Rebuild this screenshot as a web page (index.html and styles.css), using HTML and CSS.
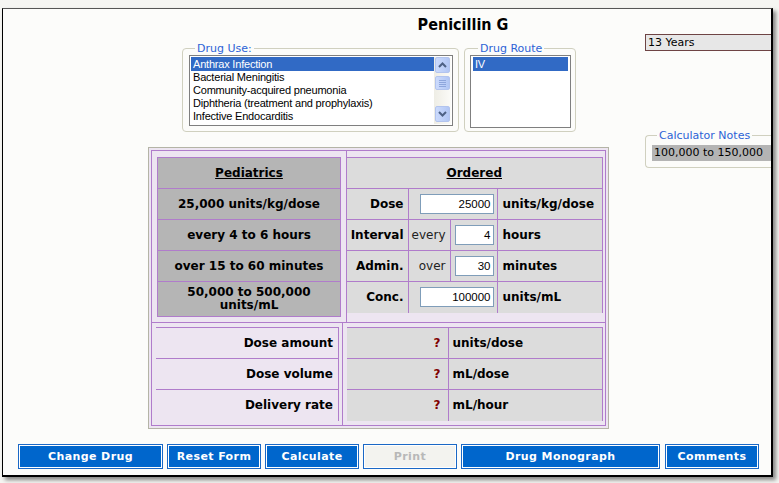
FILE: index.html
```html
<!DOCTYPE html>
<html>
<head>
<meta charset="utf-8">
<title>Penicillin G</title>
<link rel="stylesheet" href="styles.css">
</head>
<body>
<div class="win">
  <h1 class="title">Penicillin G</h1>
  <div class="main">
    <div class="center">
      <div class="selectors">
        <fieldset class="grp grp-use">
          <legend>Drug Use:</legend>
          <div class="listbox lb-use">
            <ul class="items">
              <li class="sel">Anthrax Infection</li>
              <li>Bacterial Meningitis</li>
              <li>Community-acquired pneumonia</li>
              <li>Diphtheria (treatment and prophylaxis)</li>
              <li>Infective Endocarditis</li>
            </ul>
            <div class="scrollbar">
              <div class="sb-btn"><svg width="9" height="6" viewBox="0 0 9 6"><path d="M1 5 L4.5 1.5 L8 5" fill="none" stroke="#4d6185" stroke-width="2"/></svg></div>
              <div class="sb-thumb"><svg width="7" height="7" viewBox="0 0 7 7"><path d="M0 0.5H7M0 2.5H7M0 4.5H7M0 6.5H7" stroke="#8ea6dc" stroke-width="1"/></svg></div>
              <div class="sb-track"></div>
              <div class="sb-btn"><svg width="9" height="6" viewBox="0 0 9 6"><path d="M1 1 L4.5 4.5 L8 1" fill="none" stroke="#4d6185" stroke-width="2"/></svg></div>
            </div>
          </div>
        </fieldset>
        <fieldset class="grp grp-route">
          <legend>Drug Route</legend>
          <div class="listbox lb-route">
            <ul class="items">
              <li class="sel">IV</li>
            </ul>
          </div>
        </fieldset>
      </div>

      <div class="calc">
        <div class="calc-in">
          <div class="calc-top">
            <div class="ped-cell">
              <table class="ped">
                <tr><td class="hd"><u>Pediatrics</u></td></tr>
                <tr><td>25,000 units/kg/dose</td></tr>
                <tr><td>every 4 to 6 hours</td></tr>
                <tr><td>over 15 to 60 minutes</td></tr>
                <tr class="two"><td>50,000 to 500,000<br>units/mL</td></tr>
              </table>
            </div>
            <div class="ord-cell">
              <table class="ord">
                <colgroup><col class="c1"><col class="c2"><col class="c3"><col class="c4"></colgroup>
                <tr><td class="hd" colspan="4"><u>Ordered</u></td></tr>
                <tr><td class="lab">Dose</td><td class="inp" colspan="2"><input class="num wide" value="25000"></td><td class="unit">units/kg/dose</td></tr>
                <tr><td class="lab">Interval</td><td class="pre">every</td><td class="inp"><input class="num narrow" value="4"></td><td class="unit">hours</td></tr>
                <tr><td class="lab">Admin.</td><td class="pre">over</td><td class="inp"><input class="num narrow" value="30"></td><td class="unit">minutes</td></tr>
                <tr><td class="lab">Conc.</td><td class="inp" colspan="2"><input class="num wide" value="100000"></td><td class="unit">units/mL</td></tr>
              </table>
            </div>
          </div>
          <div class="calc-bot">
            <div class="lbl-cell">
              <table class="lbl">
                <tr><td>Dose amount</td></tr>
                <tr><td>Dose volume</td></tr>
                <tr><td>Delivery rate</td></tr>
              </table>
            </div>
            <div class="val-cell">
              <table class="val">
                <colgroup><col class="v1"><col class="v2"></colgroup>
                <tr><td class="q">?</td><td class="unit">units/dose</td></tr>
                <tr><td class="q">?</td><td class="unit">mL/dose</td></tr>
                <tr><td class="q">?</td><td class="unit">mL/hour</td></tr>
              </table>
            </div>
          </div>
        </div>
      </div>
    </div>

    <div class="side">
      <div class="age">13 Years</div>
      <fieldset class="grp notes">
        <legend>Calculator Notes</legend>
        <div class="note">100,000 to 150,000</div>
      </fieldset>
    </div>
  </div>

  <div class="buttons">
    <button class="btn b-change">Change Drug</button>
    <button class="btn b-std">Reset Form</button>
    <button class="btn b-std">Calculate</button>
    <button class="btn b-std off" disabled>Print</button>
    <button class="btn b-mono">Drug Monograph</button>
    <button class="btn b-std b-last">Comments</button>
  </div>
</div>
</body>
</html>
```

FILE: styles.css
```css
* { box-sizing: border-box; }
html, body { margin: 0; padding: 0; }
body {
  width: 779px;
  height: 483px;
  overflow: hidden;
  background: #f5f5f2;
  font-family: "DejaVu Sans", Verdana, sans-serif;
  font-size: 12px;
  color: #000;
}

.win {
  margin: 8px 0 0 2px;
  width: 771px;
  height: 469px;
  background: #fcfcfa;
  border-left: 1px solid #000;
  border-top: 1px solid #555;
  border-right: 2px solid #000;
  border-bottom: 2px solid #000;
  box-shadow: 3px 3px 4px rgba(0, 0, 0, 0.45);
  overflow: hidden;
}

.title {
  margin: 0;
  height: 25px;
  padding: 6px 0 0 152px;
  text-align: center;
  font-family: "DejaVu Sans Condensed", "DejaVu Sans", sans-serif;
  font-stretch: condensed;
  font-weight: bold;
  font-size: 16px;
  line-height: 19px;
}

.main {
  display: flex;
  align-items: flex-start;
  padding-left: 145px;
}

.center { width: 461px; flex: none; }

.selectors {
  display: flex;
  gap: 5px;
  margin: 8px 0 0 34px;
}

.grp {
  margin: 0;
  min-width: 0;
  border: 1px solid #d0d0bf;
  border-radius: 4px;
}
.grp legend {
  font-size: 11px;
  line-height: 13px;
  color: #2d63d6;
  padding: 0 2px;
}
.grp-use { width: 277px; height: 90px; padding: 0 5px 5px 6px; }
.grp-use legend { margin-left: 6px; }
.grp-route { width: 112px; height: 90px; padding: 0 4px 3px 5px; }
.grp-route legend { margin-left: 8px; }

.listbox {
  display: flex;
  background: #fff;
  border: 1px solid #7f7f7f;
  padding: 1px;
}
.lb-use { height: 71px; }
.lb-route { height: 73px; padding: 1px 2px; }

.items {
  flex: 1;
  margin: 0;
  padding: 0;
  list-style: none;
  font-family: "Liberation Sans", Arial, sans-serif;
  font-size: 11px;
  letter-spacing: -0.2px;
  white-space: nowrap;
  overflow: hidden;
}
.items li { height: 13px; line-height: 13px; padding-left: 2px; }
.items li.sel { background: #316ac5; color: #fff; height: 14px; line-height: 14px; }

.scrollbar {
  width: 17px;
  flex: none;
  display: flex;
  flex-direction: column;
  padding: 0 1px 2px 1px;
  background: linear-gradient(to right, #eeede5, #fbfbf8);
}
.sb-btn, .sb-thumb {
  height: 16px;
  display: flex;
  align-items: center;
  justify-content: center;
  border: 1px solid #b2c4ee;
  border-radius: 2px;
  background: linear-gradient(to right, #cbdafc, #bccff8 60%, #b1c6f4);
}
.sb-thumb { height: 14px; margin-top: 3px; }
.sb-track { flex: 1; }

/* calculator table */
.calc {
  margin-top: 15px;
  border: 1px solid #b4b4a6;
  padding: 2px;
  background: #ede5f1;
}
.calc-in { border: 1px solid #b07ccb; }
.calc-top { display: flex; }
.calc-bot { display: flex; border-top: 1px solid #b07ccb; }

.ped-cell {
  width: 195px;
  flex: none;
  padding: 6px 5px 5px 5px;
  border-right: 1px solid #b07ccb;
}
.ord-cell { flex: 1; padding: 6px 3px 0 0; }
.lbl-cell {
  width: 191px;
  flex: none;
  padding: 4px 3px 4px 4px;
  border-right: 1px solid #b07ccb;
}
.val-cell { flex: 1; padding: 4px 3px 4px 4px; }

table { border-collapse: collapse; border-spacing: 0; }
td { padding: 0; font-weight: bold; font-size: 12px; }

.ped { width: 100%; }
.ped td {
  height: 31px;
  background: #b5b5b5;
  border: 1px solid #b07ccb;
  text-align: center;
  line-height: 13px;
}
.ped tr.two td { height: 35px; }

.ord { width: 255px; table-layout: fixed; }
.ord col.c1 { width: 61px; }
.ord col.c2 { width: 42px; }
.ord col.c3 { width: 47px; }
.ord col.c4 { width: 105px; }
.ord td {
  height: 31px;
  background: #dcdcdc;
  border: 1px solid #b07ccb;
  border-bottom: none;
}
.ord tr td:first-child { border-left: none; }
.ord td.hd { text-align: center; }
.ord td.lab { text-align: right; padding-right: 4px; }
.ord td.pre { text-align: right; padding-right: 4px; font-weight: normal; color: #222; }
.ord td.inp { text-align: right; padding-right: 3px; }
.ord td.unit, .val td.unit { text-align: left; padding-left: 5px; }

.num {
  height: 20px;
  margin: 0;
  padding: 0 2px 0 2px;
  border: 1px solid #7f9db9;
  background: #fff;
  font-family: "Liberation Sans", Arial, sans-serif;
  font-size: 11.5px;
  text-align: right;
  color: #000;
  vertical-align: middle;
}
.num.wide { width: 74px; }
.num.narrow { width: 39px; }

.lbl { width: 183px; }
.lbl td {
  height: 31px;
  border-top: 1px solid #b07ccb;
  border-right: 1px solid #b07ccb;
  text-align: right;
  padding-right: 5px;
}

.val { width: 255px; table-layout: fixed; }
.val col.v1 { width: 101px; }
.val col.v2 { width: 154px; }
.val td {
  height: 31px;
  background: #dcdcdc;
  border-top: 1px solid #b07ccb;
  border-right: 1px solid #b07ccb;
}
.val td.q { text-align: right; padding-right: 7px; color: #800000; }
.val td.unit { padding-left: 4px; }

/* right side */
.side { width: 160px; flex: none; margin-left: 36px; }
.age {
  height: 17px;
  border: 1px solid #6e4444;
  background: #e7e7e7;
  font-size: 11px;
  line-height: 15px;
  padding-left: 2px;
}
.notes { margin-top: 78px; padding: 3px 0 6px 6px; border-right: none; }
.notes legend { margin-left: 5px; }
.note {
  height: 16px;
  background: #b4b4b4;
  font-size: 11px;
  line-height: 16px;
  padding-left: 2px;
  white-space: nowrap;
}

/* buttons */
.buttons {
  display: flex;
  gap: 4px;
  margin-top: 15px;
  padding-left: 15px;
}
.btn {
  height: 25px;
  margin: 0;
  padding: 0;
  border: 1px solid #1a68c6;
  box-shadow: inset 0 0 0 1px #fff;
  background: #0066cc;
  color: #fff;
  font-family: "DejaVu Sans", Verdana, sans-serif;
  font-weight: bold;
  font-size: 11px;
  letter-spacing: 0.4px;
  text-align: center;
}
.b-change { width: 145px; }
.b-std { width: 94px; }
.b-mono { width: 199px; }
.b-last { margin-left: 1px; }
.btn.off { background: #f3f3ef; color: #b8b8b8; }
```
